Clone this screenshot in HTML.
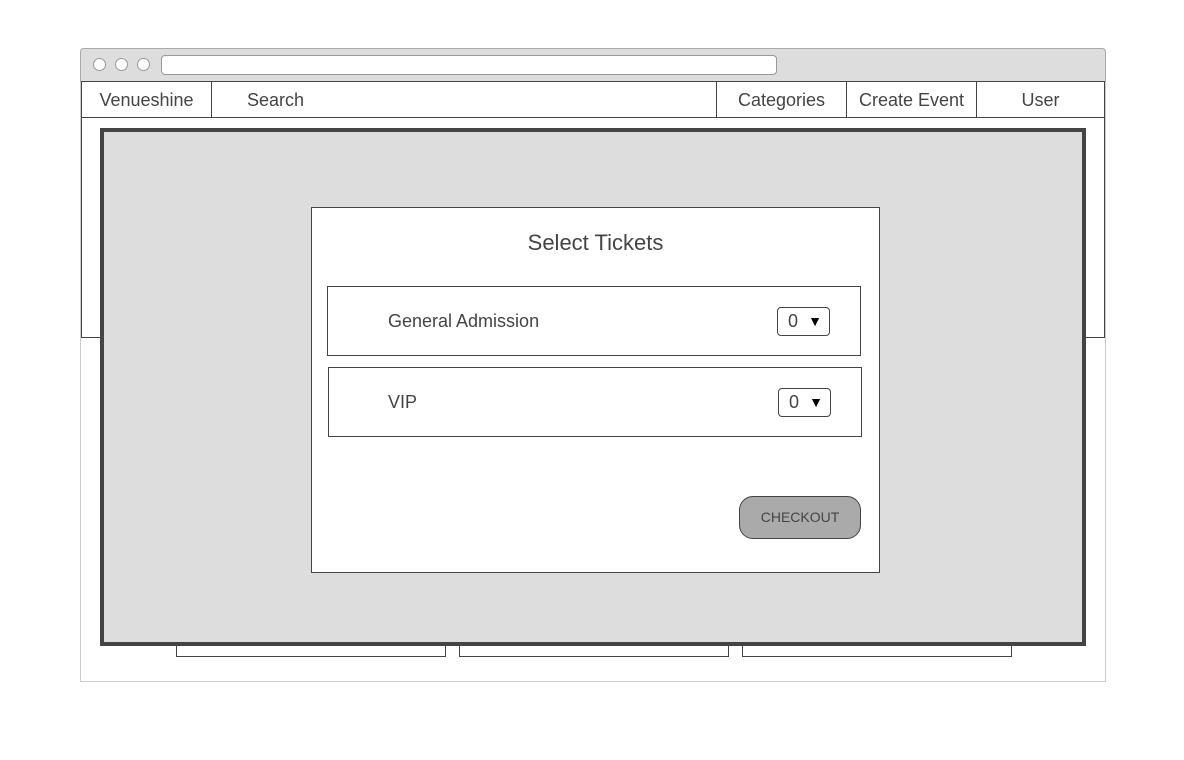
<!DOCTYPE html>
<html><head><style>
body{margin:0;width:1184px;height:760px;background:#fff;position:relative;font-family:"Liberation Sans",sans-serif;color:#444;overflow:hidden}
.a{position:absolute;box-sizing:border-box}
.dot{position:absolute;width:13px;height:13px;border-radius:50%;background:#fff;border:1px solid #999;box-sizing:border-box;top:58px}
.nav{position:absolute;top:81px;height:37px;border:1px solid #444;box-sizing:border-box;font-size:18px;text-align:center;line-height:36px}
.sel{position:absolute;width:53px;height:29px;border:1px solid #444;border-radius:4px;background:#fff;box-sizing:border-box;font-size:18px;line-height:27px;padding-left:10px}
.sel span{position:absolute;right:7px;top:0;font-size:14px;color:#000}
</style></head><body>
<div class="a" style="left:80px;top:48px;width:1026px;height:634px;border:1px solid #ccc;border-radius:4px 4px 0 0"></div>
<div class="a" style="left:80px;top:48px;width:1026px;height:34px;background:#ddd;border:1px solid #aaa;border-radius:4px 4px 0 0"></div>
<div class="dot" style="left:93px"></div><div class="dot" style="left:115px"></div><div class="dot" style="left:137px"></div>
<div class="a" style="left:161px;top:55px;width:616px;height:20px;background:#fff;border:1px solid #999;border-radius:4px"></div>
<div class="a" style="left:81px;top:81px;width:1024px;height:257px;border:1px solid #444"></div>
<div class="nav" style="left:81px;width:131px">Venueshine</div>
<div class="nav" style="left:211px;width:506px;text-align:left;padding-left:35px">Search</div>
<div class="nav" style="left:716px;width:131px">Categories</div>
<div class="nav" style="left:846px;width:131px">Create Event</div>
<div class="nav" style="left:976px;width:129px">User</div>
<div class="a" style="left:176px;top:620px;width:270px;height:37px;border:1px solid #444"></div>
<div class="a" style="left:459px;top:620px;width:270px;height:37px;border:1px solid #444"></div>
<div class="a" style="left:742px;top:620px;width:270px;height:37px;border:1px solid #444"></div>
<div class="a" style="left:100px;top:128px;width:986px;height:518px;background:#ddd;border:4px solid #444"></div>
<div class="a" style="left:311px;top:207px;width:569px;height:366px;background:#fff;border:1px solid #444"></div>
<div class="a" style="left:311px;top:230px;width:569px;text-align:center;font-size:22px">Select Tickets</div>
<div class="a" style="left:327px;top:286px;width:534px;height:70px;border:1px solid #444"></div>
<div class="a" style="left:388px;top:311px;font-size:18px">General Admission</div>
<div class="sel" style="left:777px;top:307px">0<span>▼</span></div>
<div class="a" style="left:328px;top:367px;width:534px;height:70px;border:1px solid #444"></div>
<div class="a" style="left:388px;top:392px;font-size:18px">VIP</div>
<div class="sel" style="left:778px;top:388px">0<span>▼</span></div>
<div class="a" style="left:739px;top:496px;width:122px;height:43px;background:#aaa;border:1px solid #444;border-radius:14px;font-size:14px;text-align:center;line-height:41px">CHECKOUT</div>
</body></html>
